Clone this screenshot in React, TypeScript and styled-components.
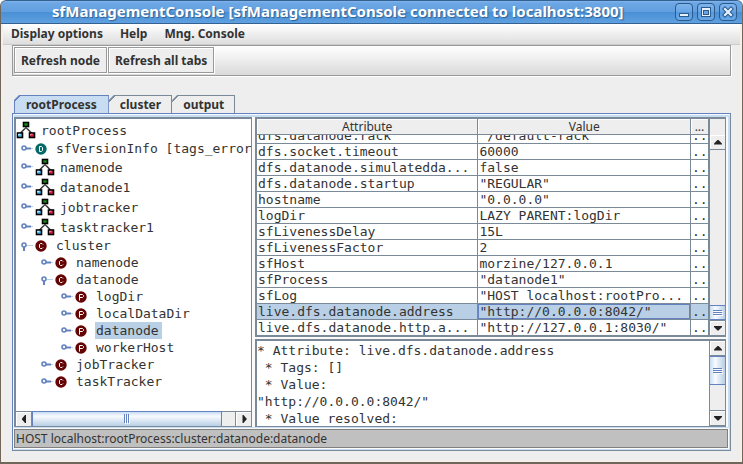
import React from 'react';
import styled, { createGlobalStyle, css } from 'styled-components';

const steel = '#7a8a99';
const blue = '#6382bf';
const pale = '#b8cfe5';
const ink = '#333333';
const ui = '"Noto Sans", "Open Sans", sans-serif';
const mono = '"DejaVu Sans Mono", "Liberation Mono", monospace';

const GlobalStyle = createGlobalStyle`
  * { box-sizing: border-box; }
  body { margin: 0; background: #fff; color: ${ink}; font-family: ${ui}; }
  button { font-family: inherit; color: inherit; padding: 0; margin: 0; }
  svg { flex: none; }
`;

const Frame = styled.div`
  display: flex;
  flex-direction: column;
  height: 100vh;
  overflow: hidden;
  background: #eeeeee;
  border: 1px solid #6f665c;
  border-top: 0;
  border-bottom-width: 2px;
  border-radius: 6px 6px 0 0;
`;

const TitleBar = styled.header`
  display: flex;
  align-items: center;
  flex: none;
  height: 24px;
  margin: 0 -1px;
  padding: 0 5px 0 51px;
  border: 1px solid #34618f;
  border-radius: 6px 6px 0 0;
  background: linear-gradient(#82b6ee 0, #6ca6e4 2px, #629fe0 50%, #4a90d6 52%, #5fa0e0 100%);
`;

const Title = styled.h1`
  flex: 1;
  margin: 0;
  padding-bottom: 2px;
  font: bold 15px/20px ${ui};
  color: #fff;
  white-space: nowrap;
  text-shadow: 1px 1px 1px #2f5f93;
`;

const WindowButtons = styled.div`
  display: flex;
  gap: 4px;
`;

const WindowButton = styled.button`
  display: flex;
  width: 18px;
  height: 18px;
  border: 1px solid #2c5a8a;
  border-radius: 4px;
  background: linear-gradient(#7fb4ee, #68a4e4 50%, #559adf 52%, #6aa9e8);
`;

const Body = styled.div`
  display: flex;
  flex-direction: column;
  flex: 1;
  min-height: 0;
  border: solid #f4efe9;
  border-width: 0 2px 2px;
`;

const MenuBar = styled.nav`
  display: flex;
  gap: 17px;
  flex: none;
  height: 21px;
  padding-left: 8px;
  border-bottom: 1px solid #cccccc;
  background: linear-gradient(#ffffff, #dedede);
`;

const MenuButton = styled.button`
  border: 0;
  background: none;
  font-size: 12px;
  font-weight: bold;
  line-height: 18px;
`;

const Content = styled.main`
  display: flex;
  flex-direction: column;
  flex: 1;
  min-height: 0;
  padding: 0 9px 9px;
`;

const Toolbar = styled.div`
  display: flex;
  flex: none;
  gap: 1px;
  height: 31px;
  padding: 1px;
  border: 1px solid #999999;
  box-shadow: 1px 1px 0 #fff;
  background: linear-gradient(#ffffff, #dadada);
`;

const ToolButton = styled.button`
  height: 26px;
  padding: 0 6px;
  border: 1px solid #999999;
  background: #eeeeee;
  box-shadow: inset 1px 1px 0 #fff, 1px 1px 0 #fff;
  font-size: 12px;
  font-weight: bold;
`;

const TabList = styled.div`
  display: flex;
  flex: none;
  height: 18px;
  margin-top: 19px;
  padding-left: 2px;
`;

const Tab = styled.button<{ $active?: boolean }>`
  padding: 0 ${p => (p.$active ? 11 : 10)}px;
  border: 1px solid ${p => (p.$active ? blue : steel)};
  border-left-color: ${p => (p.$active ? blue : 'transparent')};
  border-bottom: 0;
  background: ${p =>
    p.$active
      ? `linear-gradient(135deg, ${blue} 5px, #c8ddf2 5px)`
      : `linear-gradient(135deg, ${steel} 5px, #eee 5px)`};
  background-origin: border-box;
  clip-path: polygon(5px 0, 100% 0, 100% 100%, 0 100%, 0 5px);
  font-size: 12px;
  font-weight: bold;
  line-height: 17px;
`;

const TabPane = styled.section`
  display: flex;
  flex-direction: column;
  flex: 1;
  min-height: 0;
  gap: 2px;
  padding: 1px 2px 2px 1px;
  border: 1px solid ${blue};
  border-right-color: ${steel};
  border-bottom-color: ${steel};
  background: #c8ddf2;
  box-shadow: inset 1px 1px 0 #f4f9fe;
`;

const Split = styled.div`
  display: grid;
  grid-template-columns: minmax(0, 238fr) minmax(0, 471fr);
  gap: 3px;
  flex: 1;
  min-height: 0;
  padding-right: 2px;
  background: #fafafa;
  border-top: 2px solid #c8ddf2;
`;

const panel = css`
  min-height: 0;
  min-width: 0;
  border: 1px solid ${steel};
  border-top-width: 2px;
  border-left-width: 2px;
  background: #fff;
  overflow: hidden;
`;

const TreePanel = styled.div`
  ${panel}
  display: flex;
  flex-direction: column;
`;

const TreeList = styled.ul`
  flex: 1;
  min-height: 0;
  margin: 0;
  padding: 1px 0 0;
  overflow: hidden;
  list-style: none;
  font: 13px/17px ${mono};
`;

const TreeRow = styled.li<{ $level: number; $tall: boolean }>`
  display: flex;
  align-items: center;
  height: ${p => (p.$tall ? 20 : 17)}px;
  padding-left: ${p => (p.$level === 0 ? 0 : p.$level * 20 - 15)}px;
  white-space: pre;
`;

const Label = styled.span<{ $selected?: boolean; $wideIcon: boolean }>`
  margin-left: ${p => (p.$wideIcon ? 4 : 8)}px;
  padding: 0 3px 0 1px;
  background: ${p => (p.$selected ? pale : 'transparent')};
`;

const Toggle = styled.button`
  display: flex;
  margin-right: 2px;
  border: 0;
  background: none;
`;

const RightColumn = styled.div`
  display: grid;
  grid-template-rows: minmax(0, 220fr) minmax(0, 88fr);
  gap: 2px;
  min-height: 0;
`;

const ScrollPane = styled.div`
  ${panel}
  display: flex;
`;

const TableView = styled.div`
  flex: 1;
  min-width: 0;
  overflow: hidden;
`;

const Table = styled.table`
  width: 100%;
  table-layout: fixed;
  border-collapse: separate;
  border-spacing: 0;
  font: 13px/15px ${mono};
`;

const Col = styled.col<{ $width: string }>`
  width: ${p => p.$width};
`;

const HeadCell = styled.th`
  height: 16px;
  padding: 0;
  border-right: 1px solid ${steel};
  border-bottom: 1px solid ${steel};
  background: #eeeeee;
  box-shadow: inset 1px 1px 0 #fff;
  font: 12px/14px ${ui};
`;

const Cell = styled.td<{ $selected?: boolean; $focus?: boolean }>`
  padding: 0 0 0 1px;
  border-right: 1px solid ${steel};
  border-bottom: 1px solid ${steel};
  background: ${p => (p.$selected ? pale : '#fff')};
  box-shadow: ${p => (p.$focus ? `inset 0 0 0 1px ${blue}` : 'none')};
`;

const CellText = styled.div<{ $clipped?: boolean }>`
  display: flex;
  align-items: flex-end;
  height: ${p => (p.$clipped ? 8 : 15)}px;
  overflow: hidden;
  white-space: pre;
`;

const VerticalBar = styled.div<{ $corner?: boolean }>`
  display: flex;
  flex-direction: column;
  flex: none;
  width: 16px;
  padding-top: ${p => (p.$corner ? 16 : 0)}px;
  border-left: 1px solid ${steel};
  background: #eeeeee;
`;

const ArrowButton = styled.button`
  display: flex;
  align-items: center;
  justify-content: center;
  flex: none;
  width: 15px;
  height: 15px;
  border: solid ${steel};
  border-width: 0 0 1px;
  background: #eeeeee;
  box-shadow: inset 1px 1px 0 #fff;
`;

const VerticalTrack = styled.div<{ $before: number; $after: number }>`
  display: grid;
  flex: 1;
  min-height: 0;
  grid-template-rows: minmax(0, ${p => p.$before}fr) auto minmax(0, ${p => p.$after}fr);
  border-bottom: 1px solid ${steel};
`;

const VerticalThumb = styled.div<{ $long?: boolean }>`
  display: flex;
  align-items: center;
  justify-content: center;
  grid-row: 2;
  height: ${p => (p.$long ? 29 : 15)}px;
  border: solid ${blue};
  border-width: 1px 0;
  background: linear-gradient(90deg, #c8ddf2, #f8fbfe 35%, #b8cfe5);
`;

const HorizontalBar = styled.div`
  display: flex;
  flex: none;
  height: 15px;
  border-top: 1px solid ${steel};
  background: #eeeeee;
`;

const HorizontalTrack = styled.div`
  display: grid;
  grid-template-columns: 190fr 13fr;
  flex: 1;
  border: solid ${steel};
  border-width: 0 1px;
`;

const HorizontalThumb = styled.div`
  display: flex;
  align-items: center;
  justify-content: center;
  margin-top: -1px;
  border: 1px solid ${blue};
  border-bottom-width: 0;
  background: linear-gradient(#c8ddf2, #f8fbfe 30%, #b8cfe5);
`;

const Details = styled.textarea`
  flex: 1;
  min-width: 0;
  padding: 1px 0 0;
  border: 0;
  outline: 0;
  resize: none;
  overflow: hidden;
  background: #fff;
  color: ${ink};
  font: 13px/17px ${mono};
  white-space: pre;
`;

const StatusBar = styled.footer`
  flex: none;
  height: 19px;
  padding-left: 1px;
  border: 1px solid #808080;
  outline: 1px solid #fafafa;
  background: #c0c0c0;
  font-size: 12px;
  line-height: 17px;
  white-space: nowrap;
`;

type Kind = 'tree' | 'D' | 'C' | 'P';

function NodeIcon({ kind }: { kind: Kind }) {
  if (kind === 'tree') {
    return (
      <svg width="20" height="18" viewBox="0 0 20 18" aria-hidden="true">
        <path d="M10 5v3M9 7.500l-5 5M11 7.500l5 5" stroke="#333" strokeWidth="1.500" fill="none" />
        <rect x="7.500" y="1.500" width="5" height="4" fill="#109010" stroke="#000" strokeWidth="1.600" />
        <rect x="1.500" y="12" width="5" height="4.500" fill="#43b8fa" stroke="#000" strokeWidth="1.600" />
        <path d="M2.500 14.500V13.300h2" stroke="#d6f1ff" fill="none" />
        <rect x="13.500" y="12" width="5" height="4.500" fill="#dc1748" stroke="#000" strokeWidth="1.600" />
        <path d="M14.500 14.500V13.300h2" stroke="#ff8aa5" fill="none" />
      </svg>
    );
  }
  const glyphs = {
    D: 'M4.500 3.500h2l1 1v3l-1 1h-2z',
    C: 'M8 4.500L7 3.500H5.500l-1 1v3l1 1H7l1-1',
    P: 'M4.500 9.500v-6h3l1 1v1l-1 1h-3',
  };
  return (
    <svg width="12" height="12" viewBox="0 0 12 12" aria-hidden="true">
      <circle cx="6" cy="6" r="5.700" fill={kind === 'D' ? '#046a68' : '#640404'} />
      <path d={glyphs[kind]} stroke="#fff" fill="none" />
    </svg>
  );
}

function ToggleIcon({ open }: { open?: boolean }) {
  return (
    <svg width="12" height="12" viewBox="0 0 12 12" aria-hidden="true">
      <path d="M6 5.500h6" stroke="#b8cfe5" />
      {open ? <path d="M3 6v5" stroke={blue} strokeWidth="2" /> : <path d="M5 5.500h5" stroke={blue} strokeWidth="2" />}
      <circle cx="3" cy="5" r="2" fill="#eef5fc" stroke={blue} strokeWidth="1.600" />
    </svg>
  );
}

type Direction = 'up' | 'down' | 'left' | 'right';

function Arrow({ dir }: { dir: Direction }) {
  const shapes = {
    up: 'M0 6.500h8v-1L4.500 2h-1L0 5.500z',
    down: 'M0 2h8v1L4.500 6.500h-1L0 3z',
    left: 'M6 0v8H5L2 4.500v-1L5 0z',
    right: 'M2.500 0v8h1L6.500 4.500v-1L3.500 0z',
  };
  return (
    <svg width="8" height="8" viewBox="0 0 8 8" aria-hidden="true">
      <path d={shapes[dir]} fill="#222" />
    </svg>
  );
}

function Grip({ vertical }: { vertical?: boolean }) {
  return vertical ? (
    <svg width="6" height="10" viewBox="0 0 6 10" aria-hidden="true">
      <path d="M.5 0v9M2.500 0v9M4.500 0v9" stroke={blue} />
      <path d="M1.500 1v9M3.500 1v9M5.500 1v9" stroke="#fff" />
    </svg>
  ) : (
    <svg width="10" height="6" viewBox="0 0 10 6" aria-hidden="true">
      <path d="M0 .5h9M0 2.500h9M0 4.500h9" stroke={blue} />
      <path d="M1 1.500h9M1 3.500h9M1 5.500h9" stroke="#fff" />
    </svg>
  );
}

interface VerticalScrollProps { corner?: boolean; long?: boolean; before: number; after: number }

function VerticalScroll({ corner, long, before, after }: VerticalScrollProps) {
  return (
    <VerticalBar $corner={corner}>
      <ArrowButton aria-label="Scroll up"><Arrow dir="up" /></ArrowButton>
      <VerticalTrack $before={before} $after={after}>
        <VerticalThumb $long={long}><Grip /></VerticalThumb>
      </VerticalTrack>
      <ArrowButton aria-label="Scroll down"><Arrow dir="down" /></ArrowButton>
    </VerticalBar>
  );
}

interface TreeNode { label: string; level: number; kind: Kind; open?: boolean; selected?: boolean }

const nodes: TreeNode[] = [
  { label: 'rootProcess', level: 0, kind: 'tree' },
  { label: 'sfVersionInfo [tags_error]', level: 1, kind: 'D' },
  { label: 'namenode', level: 1, kind: 'tree' },
  { label: 'datanode1', level: 1, kind: 'tree' },
  { label: 'jobtracker', level: 1, kind: 'tree' },
  { label: 'tasktracker1', level: 1, kind: 'tree' },
  { label: 'cluster', level: 1, kind: 'C', open: true },
  { label: 'namenode', level: 2, kind: 'C' },
  { label: 'datanode', level: 2, kind: 'C', open: true },
  { label: 'logDir', level: 3, kind: 'P' },
  { label: 'localDataDir', level: 3, kind: 'P' },
  { label: 'datanode', level: 3, kind: 'P', selected: true },
  { label: 'workerHost', level: 3, kind: 'P' },
  { label: 'jobTracker', level: 2, kind: 'C' },
  { label: 'taskTracker', level: 2, kind: 'C' },
];

const attributes: [string, string][] = [
  ['dfs.datanode.rack', '"/default-rack"'],
  ['dfs.socket.timeout', '60000'],
  ['dfs.datanode.simulatedda...', 'false'],
  ['dfs.datanode.startup', '"REGULAR"'],
  ['hostname', '"0.0.0.0"'],
  ['logDir', 'LAZY PARENT:logDir'],
  ['sfLivenessDelay', '15L'],
  ['sfLivenessFactor', '2'],
  ['sfHost', 'morzine/127.0.0.1'],
  ['sfProcess', '"datanode1"'],
  ['sfLog', '"HOST localhost:rootPro...'],
  ['live.dfs.datanode.address', '"http://0.0.0.0:8042/"'],
  ['live.dfs.datanode.http.a...', '"http://127.0.0.1:8030/"'],
];

const selectedAttribute = 'live.dfs.datanode.address';

const details = [
  `* Attribute: ${selectedAttribute}`,
  ' * Tags: []',
  ' * Value:',
  '"http://0.0.0.0:8042/"',
  ' * Value resolved:',
].join('\n');

export default function App() {
  return (
    <Frame>
      <GlobalStyle />
      <TitleBar>
        <Title>sfManagementConsole [sfManagementConsole connected to localhost:3800]</Title>
        <WindowButtons>
          <WindowButton aria-label="Minimize">
            <svg width="16" height="16" viewBox="0 0 16 16">
              <rect x="3.500" y="9.500" width="9" height="3" fill="#e6f1fc" stroke="#2c5a8a" />
            </svg>
          </WindowButton>
          <WindowButton aria-label="Maximize">
            <svg width="16" height="16" viewBox="0 0 16 16">
              <rect x="3.500" y="3.500" width="9" height="9" fill="#e6f1fc" stroke="#2c5a8a" />
              <rect x="5.500" y="6.500" width="5" height="4" fill="#69a5e5" stroke="#2c5a8a" />
            </svg>
          </WindowButton>
          <WindowButton aria-label="Close">
            <svg width="16" height="16" viewBox="0 0 16 16">
              <path d="M5 5l6 6M11 5l-6 6" stroke="#2c5a8a" strokeWidth="4.200" strokeLinecap="square" />
              <path d="M5 5l6 6M11 5l-6 6" stroke="#e6f1fc" strokeWidth="2.200" strokeLinecap="square" />
            </svg>
          </WindowButton>
        </WindowButtons>
      </TitleBar>
      <Body>
        <MenuBar>
          <MenuButton>Display options</MenuButton>
          <MenuButton>Help</MenuButton>
          <MenuButton>Mng. Console</MenuButton>
        </MenuBar>
        <Content>
          <Toolbar>
            <ToolButton>Refresh node</ToolButton>
            <ToolButton>Refresh all tabs</ToolButton>
          </Toolbar>
          <TabList role="tablist">
            <Tab role="tab" aria-selected="true" $active>rootProcess</Tab>
            <Tab role="tab" aria-selected="false">cluster</Tab>
            <Tab role="tab" aria-selected="false">output</Tab>
          </TabList>
          <TabPane>
            <Split>
              <TreePanel>
                <TreeList role="tree">
                  {nodes.map((n, i) => (
                    <TreeRow key={i} role="treeitem" aria-selected={!!n.selected} $level={n.level} $tall={n.kind === 'tree'}>
                      {n.level > 0 && (
                        <Toggle aria-label={`Toggle ${n.label}`}><ToggleIcon open={n.open} /></Toggle>
                      )}
                      <NodeIcon kind={n.kind} />
                      <Label $selected={n.selected} $wideIcon={n.kind === 'tree'}>{n.label}</Label>
                    </TreeRow>
                  ))}
                </TreeList>
                <HorizontalBar>
                  <ArrowButton aria-label="Scroll left"><Arrow dir="left" /></ArrowButton>
                  <HorizontalTrack><HorizontalThumb><Grip vertical /></HorizontalThumb></HorizontalTrack>
                  <ArrowButton aria-label="Scroll right"><Arrow dir="right" /></ArrowButton>
                </HorizontalBar>
              </TreePanel>
              <RightColumn>
                <ScrollPane>
                  <TableView>
                    <Table>
                      <colgroup>
                        <Col $width="49%" />
                        <Col $width="47%" />
                        <Col $width="18px" />
                      </colgroup>
                      <thead>
                        <tr>
                          <HeadCell>Attribute</HeadCell>
                          <HeadCell>Value</HeadCell>
                          <HeadCell>...</HeadCell>
                        </tr>
                      </thead>
                      <tbody>
                        {attributes.map(([name, value], i) => {
                          const selected = name === selectedAttribute;
                          return (
                            <tr key={name}>
                              <Cell $selected={selected}><CellText $clipped={i === 0}>{name}</CellText></Cell>
                              <Cell $selected={selected} $focus={selected}><CellText $clipped={i === 0}>{value}</CellText></Cell>
                              <Cell $selected={selected}><CellText $clipped={i === 0}>..</CellText></Cell>
                            </tr>
                          );
                        })}
                      </tbody>
                    </Table>
                  </TableView>
                  <VerticalScroll corner before={155} after={0} />
                </ScrollPane>
                <ScrollPane>
                  <Details readOnly aria-label="Attribute details" value={details} />
                  <VerticalScroll long before={0} after={25} />
                </ScrollPane>
              </RightColumn>
            </Split>
            <StatusBar>HOST localhost:rootProcess:cluster:datanode:datanode</StatusBar>
          </TabPane>
        </Content>
      </Body>
    </Frame>
  );
}
